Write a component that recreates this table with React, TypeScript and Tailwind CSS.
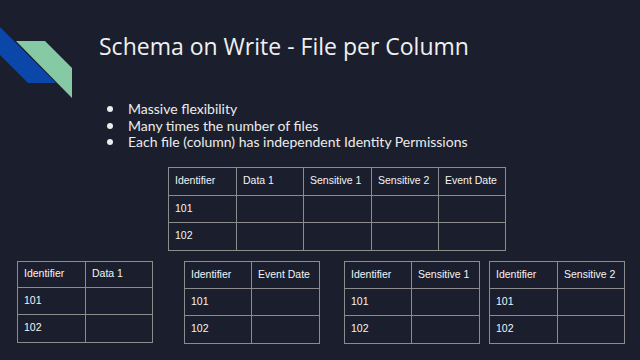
import React from 'react'

const Logo = () => (
  <svg width="80" height="100" viewBox="0 0 80 100" className="shrink-0">
    <polygon points="0,27 56,83 28,83 0,55" fill="#0b47a8" />
    <polygon points="16,41 45,41 72,68 72,98" fill="#86c9a5" />
  </svg>
)

type GridProps = {
  cols: string
  headers: string[]
  className?: string
}

const Grid: React.FC<GridProps> = ({ cols, headers, className }) => {
  const rows = [headers, ['101', ...headers.slice(1).map(() => '')], ['102', ...headers.slice(1).map(() => '')]]
  return (
    <div className={`grid gap-px bg-[#8c8c8c] p-px ${cols} ${className ?? ''}`}>
      {rows.flatMap((row, r) =>
        row.map((cell, c) => (
          <div
            key={`${r}-${c}`}
            className="flex items-center bg-[#1b1f2d] pl-[6px] text-[10.5px] text-[#f4f4f4]"
          >
            {cell}
          </div>
        ))
      )}
    </div>
  )
}

export default function App() {
  return (
    <div
      className="flex h-[360px] w-[640px] flex-col overflow-hidden bg-[#1b1f2d]"
      style={{ fontFamily: '"Liberation Sans", Arial, sans-serif' }}
    >
      <div className="flex">
        <Logo />
        <div className="ml-[19px] flex flex-col">
          <h1
            className="mt-[31px] text-[23px] leading-[30px] text-[#f0f0f0]"
            style={{ fontFamily: '"Open Sans", sans-serif' }}
          >
            Schema on Write - File per Column
          </h1>
          <ul
            className="ml-[8px] mt-[40px] text-[14px] leading-[16.5px] text-[#ececec]"
            style={{ fontFamily: 'Lato, sans-serif' }}
          >
            {[
              'Massive flexibility',
              'Many times the number of files',
              'Each file (column) has independent Identity Permissions',
            ].map((t) => (
              <li key={t} className="flex items-center">
                <span className="mr-[15px] inline-block h-[6px] w-[6px] rounded-full bg-[#ececec]" />
                {t}
              </li>
            ))}
          </ul>
        </div>
      </div>

      <div className="mt-[16px] flex pl-[168px]">
        <Grid
          cols="grid-cols-[67px_66px_67px_66px_66px] grid-rows-[27px_26px_27px]"
          headers={['Identifier', 'Data 1', 'Sensitive 1', 'Sensitive 2', 'Event Date']}
        />
      </div>

      <div className="mt-[10px] flex items-start">
        <Grid
          className="ml-[17px]"
          cols="grid-cols-[67px_66px] grid-rows-[25px_26px_27px]"
          headers={['Identifier', 'Data 1']}
        />
        <Grid
          className="ml-[31px]"
          cols="grid-cols-[66px_67px] grid-rows-[26px_26px_27px]"
          headers={['Identifier', 'Event Date']}
        />
        <Grid
          className="ml-[24px]"
          cols="grid-cols-[66px_67px] grid-rows-[26px_26px_27px]"
          headers={['Identifier', 'Sensitive 1']}
        />
        <Grid
          className="ml-[9px]"
          cols="grid-cols-[67px_66px] grid-rows-[26px_26px_27px]"
          headers={['Identifier', 'Sensitive 2']}
        />
      </div>
    </div>
  )
}
